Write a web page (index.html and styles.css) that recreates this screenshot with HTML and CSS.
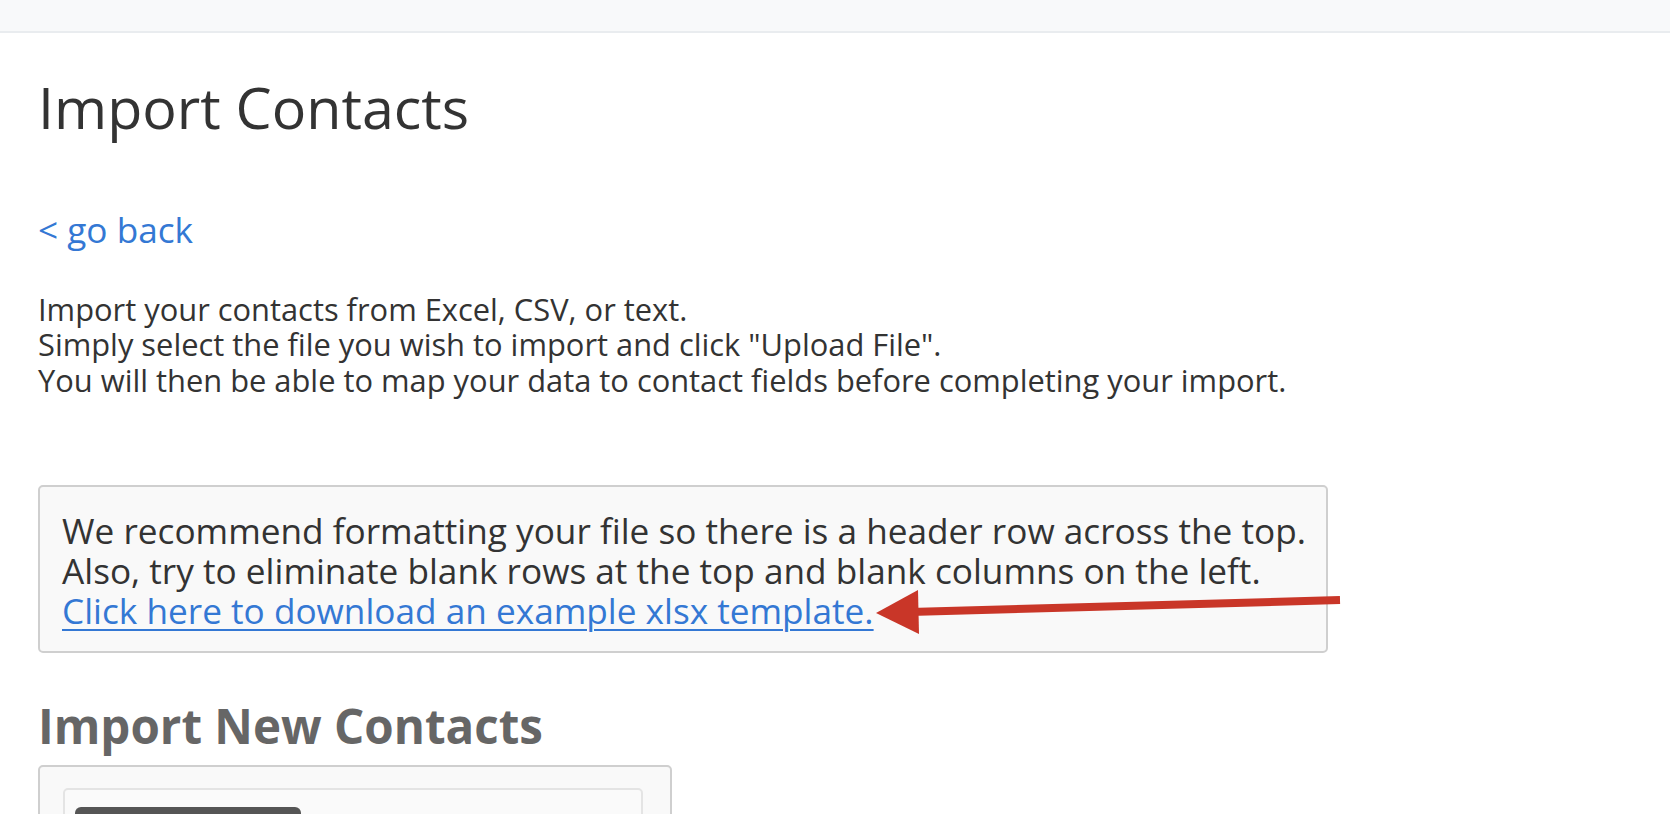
FILE: index.html
```html
<!DOCTYPE html>
<html lang="en">
<head>
  <meta charset="UTF-8">
  <meta name="viewport" content="width=device-width, initial-scale=1.0">
  <title>Import Contacts</title>
  <link rel="stylesheet" href="styles.css">
</head>
<body>
  <div class="topbar"></div>
  <div class="page">
    <h1>Import Contacts</h1>
    <a class="back" href="#">&lt; go back</a>
    <p class="intro">
      Import your contacts from Excel, CSV, or text.<br>
      Simply select the file you wish to import and click "Upload File".<br>
      You will then be able to map your data to contact fields before completing your import.
    </p>
    <div class="well">
      We recommend formatting your file so there is a header row across the top.<br>
      Also, try to eliminate blank rows at the top and blank columns on the left.<br>
      <a href="#">Click here to download an example xlsx template.</a>
    </div>
    <h2>Import New Contacts</h2>
    <div class="panel">
      <div class="panel-inner">
        <button class="choose">Choose File</button>
      </div>
    </div>

    <!-- annotation arrow pointing at the template link -->
    <svg class="arrow" width="500" height="70" viewBox="0 0 500 70">
      <line x1="48" y1="42" x2="478" y2="30" stroke="#c93628" stroke-width="8"/>
      <polygon points="14,43 56,20 57,64" fill="#c93628"/>
    </svg>
  </div>
</body>
</html>
```

FILE: styles.css
```css
body {
  margin: 0;
  font-family: "Open Sans", "Liberation Sans", sans-serif;
  color: #333;
  background: #fff;
  overflow: hidden;
}
.topbar {
  height: 31px;
  background: #f8f9fa;
  border-bottom: 2px solid #e9ecef;
}
.page {
  position: relative;
  padding: 43px 38px 0;
}
h1 {
  margin: 0;
  font-size: 57.4px;
  font-weight: 400;
  line-height: 1.1;
}
.back {
  display: block;
  margin-top: 70px;
  font-size: 35.2px;
  line-height: 41.5px;
  color: #3478d4;
  text-decoration: none;
}
.intro {
  margin: 41px 0 0;
  font-size: 30.85px;
  line-height: 35.7px;
}
.well {
  box-sizing: border-box;
  width: 1290px;
  margin-top: 86px;
  padding: 23px 18px 21px 22px;
  font-size: 35.2px;
  line-height: 40px;
  white-space: nowrap;
  background: #f9f9f9;
  border: 2px solid #cfcfcf;
  border-radius: 5px;
}
.well a {
  color: #3478d4;
  text-decoration: underline;
  text-underline-offset: 5px;
  text-decoration-thickness: 2px;
}
h2 {
  margin: 47px 0 0;
  font-size: 47.5px;
  font-weight: 700;
  line-height: 1.1;
  color: #666;
}
.panel {
  box-sizing: border-box;
  width: 634px;
  height: 200px;
  margin-top: 13px;
  padding: 21px 27px 0 23px;
  background: #f9f9f9;
  border: 2px solid #cfcfcf;
  border-radius: 5px;
}
.panel-inner {
  height: 160px;
  padding: 17px 10px 0;
  background: #fafafa;
  border: 2px solid #e4e4e4;
  border-radius: 5px;
}
.choose {
  width: 226px;
  height: 48px;
  border: none;
  border-radius: 6px;
  background: #555;
  color: #fff;
  font-family: inherit;
  font-size: 28px;
}
.arrow {
  position: absolute;
  left: 862px;
  top: 537px;
}
```
